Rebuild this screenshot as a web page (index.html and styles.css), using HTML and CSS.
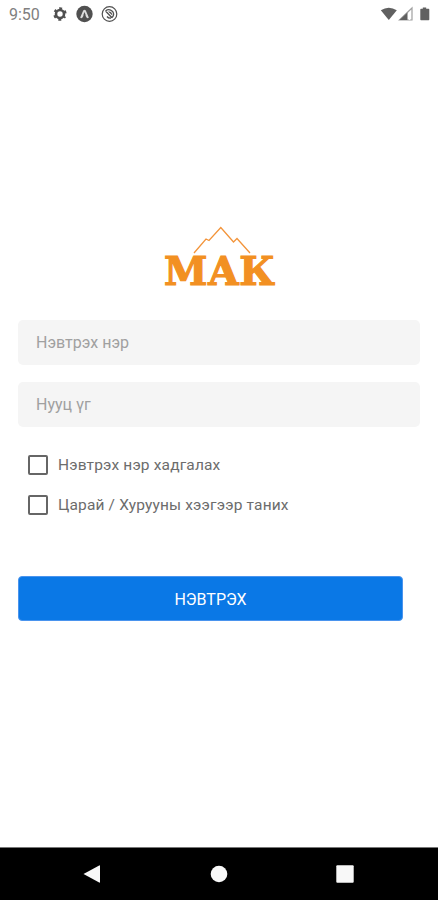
FILE: index.html
```html
<!DOCTYPE html>
<html lang="mn">
<head>
  <meta charset="UTF-8">
  <meta name="viewport" content="width=device-width, initial-scale=1.0">
  <title>МАК</title>
  <link rel="stylesheet" href="styles.css">
</head>
<body>
  <header class="status-bar">
    <span class="time">9:50</span>
    <svg class="notifications" width="68" height="18" viewBox="0 0 68 18">
      <!-- settings -->
      <g fill="none" stroke="#505050">
        <circle cx="9" cy="9" r="4" stroke-width="2.6"/>
        <circle cx="9" cy="9" r="5.7" stroke-width="2" stroke-dasharray="2.8 3.17" stroke-dashoffset="1.4" transform="rotate(30 9 9)"/>
      </g>
      <!-- expo -->
      <circle cx="33.5" cy="9" r="8.2" fill="#505050"/>
      <path d="M29.2 12.6L32.2 5.6Q33.5 3.8 34.8 5.6L37.8 12.6Q36.8 14 35.5 12.6L33.5 9L31.5 12.6Q30.2 14 29.2 12.6Z" fill="#dcdcdc"/>
      <path d="M33.5 7L34.8 10.5H32.2Z" fill="#505050"/>
      <!-- sync -->
      <circle cx="58.5" cy="9" r="7.3" fill="none" stroke="#505050" stroke-width="1.2"/>
      <path d="M54.5 6Q58 3.2 61.6 6.4Q64 10 60.8 12.8M54.5 6L61 12.8M56 11.5Q57.5 13.5 60 13" fill="none" stroke="#505050" stroke-width="1.3"/>
      <path d="M57 6.6Q61 6 61.4 10.4Z" fill="#505050"/>
    </svg>
    <svg class="signals" width="50" height="16" viewBox="0 0 50 16">
      <path d="M.8 4.3Q8.8-1 16.8 4.3L8.8 14Z" fill="#606060"/>
      <path d="M32 2V14H19.5Z" fill="#fff" stroke="#a0a0a0" stroke-width="1.2"/>
      <path d="M27.5 6.5V14H19.5Z" fill="#606060"/>
      <path d="M29.5 8V14" stroke="#fff" stroke-width="1"/>
      <path d="M42.8 1.6H46.2V2.8H48.6Q49.3 2.8 49.3 3.6V13.4Q49.3 14.2 48.6 14.2H41Q40.3 14.2 40.3 13.4V3.6Q40.3 2.8 41 2.8H42.8Z" fill="#606060"/>
    </svg>
  </header>

  <main class="login">
    <svg class="logo" width="120" height="78" viewBox="0 0 120 78">
      <path d="M35 33L47 19L50 20.5L61.8 7.5L74.5 22L78 18.5L91 33" fill="none" stroke="#f3943a" stroke-width="1.3"/>
      <text class="logo-text" x="5" y="65" textLength="111" lengthAdjust="spacingAndGlyphs">МАК</text>
    </svg>

    <form class="login-form">
      <input class="field" type="text" placeholder="Нэвтрэх нэр">
      <input class="field" type="password" placeholder="Нууц үг">
      <label class="check"><input type="checkbox">Нэвтрэх нэр хадгалах</label>
      <label class="check"><input type="checkbox">Царай / Хурууны хээгээр таних</label>
      <button class="login-btn" type="button">НЭВТРЭХ</button>
    </form>
  </main>

  <nav class="nav-bar">
    <svg width="18" height="18" viewBox="0 0 18 18"><path d="M.5 9L16.2.4Q17 0 17 1V17Q17 18 16.2 17.6Z"/></svg>
    <svg width="18" height="18" viewBox="0 0 18 18"><circle cx="9" cy="9" r="8.3"/></svg>
    <svg width="18" height="18" viewBox="0 0 18 18"><rect x=".3" y=".3" width="17.4" height="17.4" rx="1"/></svg>
  </nav>
</body>
</html>
```

FILE: styles.css
```css
body {
  margin: 0;
  height: 900px;
  display: flex;
  flex-direction: column;
  background-color: #fff;
  font-family: Roboto, sans-serif;
  overflow: hidden;
}

.status-bar {
  display: flex;
  align-items: center;
  height: 28px;
  padding: 0 8px 0 9px;
}

.time {
  width: 42px;
  color: #808080;
  font-size: 16px;
}

.signals {
  margin-left: auto;
}

.login {
  flex: 1;
  padding: 192px 18px 0;
}

.logo {
  display: block;
  margin: 0 auto;
  overflow: visible;
}

.logo-text {
  fill: #f29022;
  stroke: #f29022;
  stroke-width: 1.2px;
  font-family: "DejaVu Serif", serif;
  font-size: 40px;
  font-weight: bold;
}

.login-form {
  display: flex;
  flex-direction: column;
  margin-top: 22px;
}

.field {
  height: 45px;
  margin-bottom: 17px;
  padding: 0 18px;
  box-sizing: border-box;
  border: none;
  border-radius: 5px;
  background-color: #f5f5f5;
  font-family: inherit;
  font-size: 16px;
}

.field::placeholder {
  color: #a0a0a0;
}

.check {
  display: flex;
  align-items: center;
  height: 40px;
  margin-left: 10px;
  color: #6c6c6c;
  font-size: 15.5px;
  letter-spacing: 0.15px;
}

.field + .check {
  margin-top: 1px;
}

.check input {
  appearance: none;
  width: 20px;
  height: 20px;
  margin: 0 10px 0 0;
  border: 2px solid #666;
  border-radius: 2px;
}

.login-btn {
  width: 385px;
  height: 45px;
  margin-top: 51px;
  padding-top: 2px;
  border: 1px solid #4a94ee;
  border-radius: 4px;
  background-color: #0a78e6;
  color: #fff;
  font-family: inherit;
  font-size: 16px;
}

.nav-bar {
  display: flex;
  justify-content: space-between;
  align-items: center;
  height: 52px;
  padding: 0 84px 0 83px;
  background-color: #000;
  border-top: 1px solid #777;
}

.nav-bar svg {
  fill: #f8f8f8;
}
```
